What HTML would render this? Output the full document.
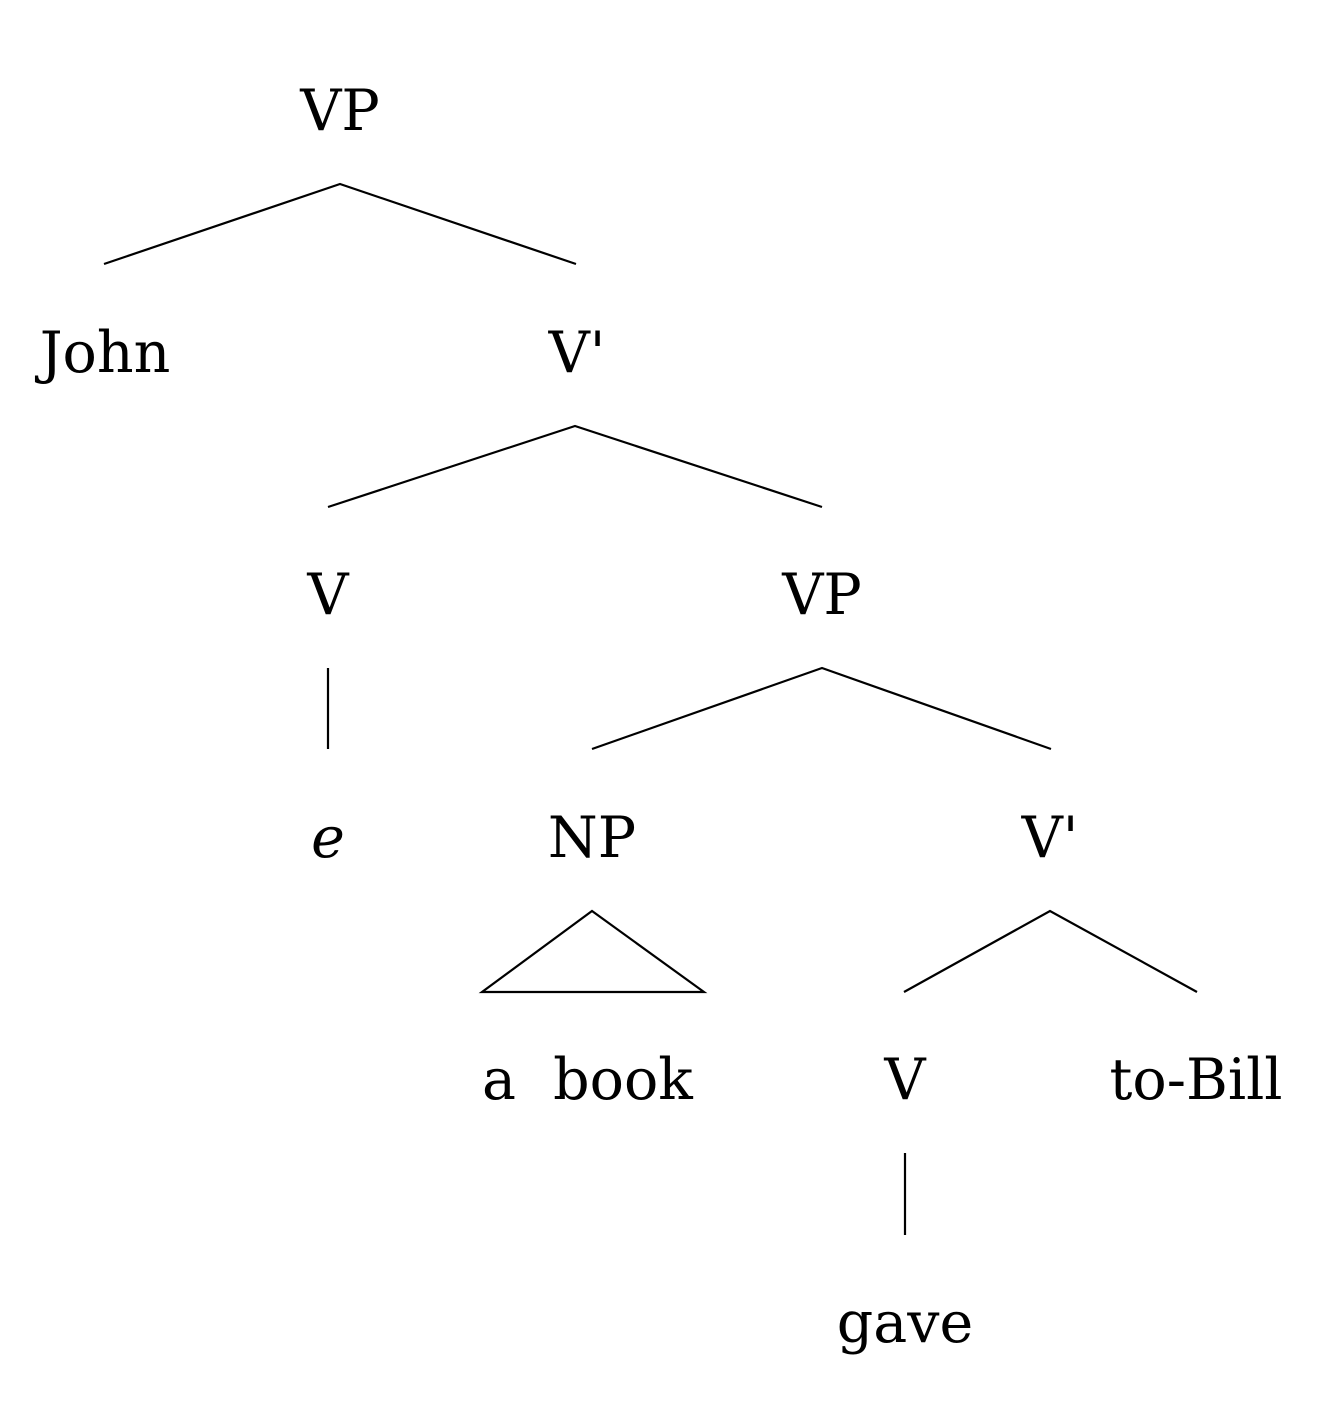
<!DOCTYPE html>
<html><head><meta charset="utf-8"><style>
html,body{margin:0;padding:0;background:#fff;}
svg{display:block;}
text{font-family:"DejaVu Serif","Liberation Serif",serif;font-size:57px;fill:#000;text-anchor:middle;}
</style></head><body>
<svg width="1321" height="1412" viewBox="0 0 1321 1412" xmlns="http://www.w3.org/2000/svg">
<g stroke="#000" stroke-width="2.2" fill="none">
<path d="M104 264L340 184L576 264"/>
<path d="M328 507L575 426L822 507"/>
<path d="M328 668L328 749"/>
<path d="M592 749L822 668L1051 749"/>
<path d="M482 992L592 911L704 992Z"/>
<path d="M904 992L1050 911L1197 992"/>
<path d="M905 1153L905 1235"/>
</g>
<text x="340" y="130">VP</text>
<text x="105" y="372">John</text>
<text x="577" y="372">V'</text>
<text x="328" y="614">V</text>
<text x="822" y="614">VP</text>
<text x="328" y="857" font-style="italic">e</text>
<text x="592" y="857">NP</text>
<text x="1050" y="857">V'</text>
<text x="499" y="1099">a</text>
<text x="623" y="1099">book</text>
<text x="905" y="1099">V</text>
<text x="1196" y="1099">to-Bill</text>
<text x="905" y="1342">gave</text>
</svg>
</body></html>
